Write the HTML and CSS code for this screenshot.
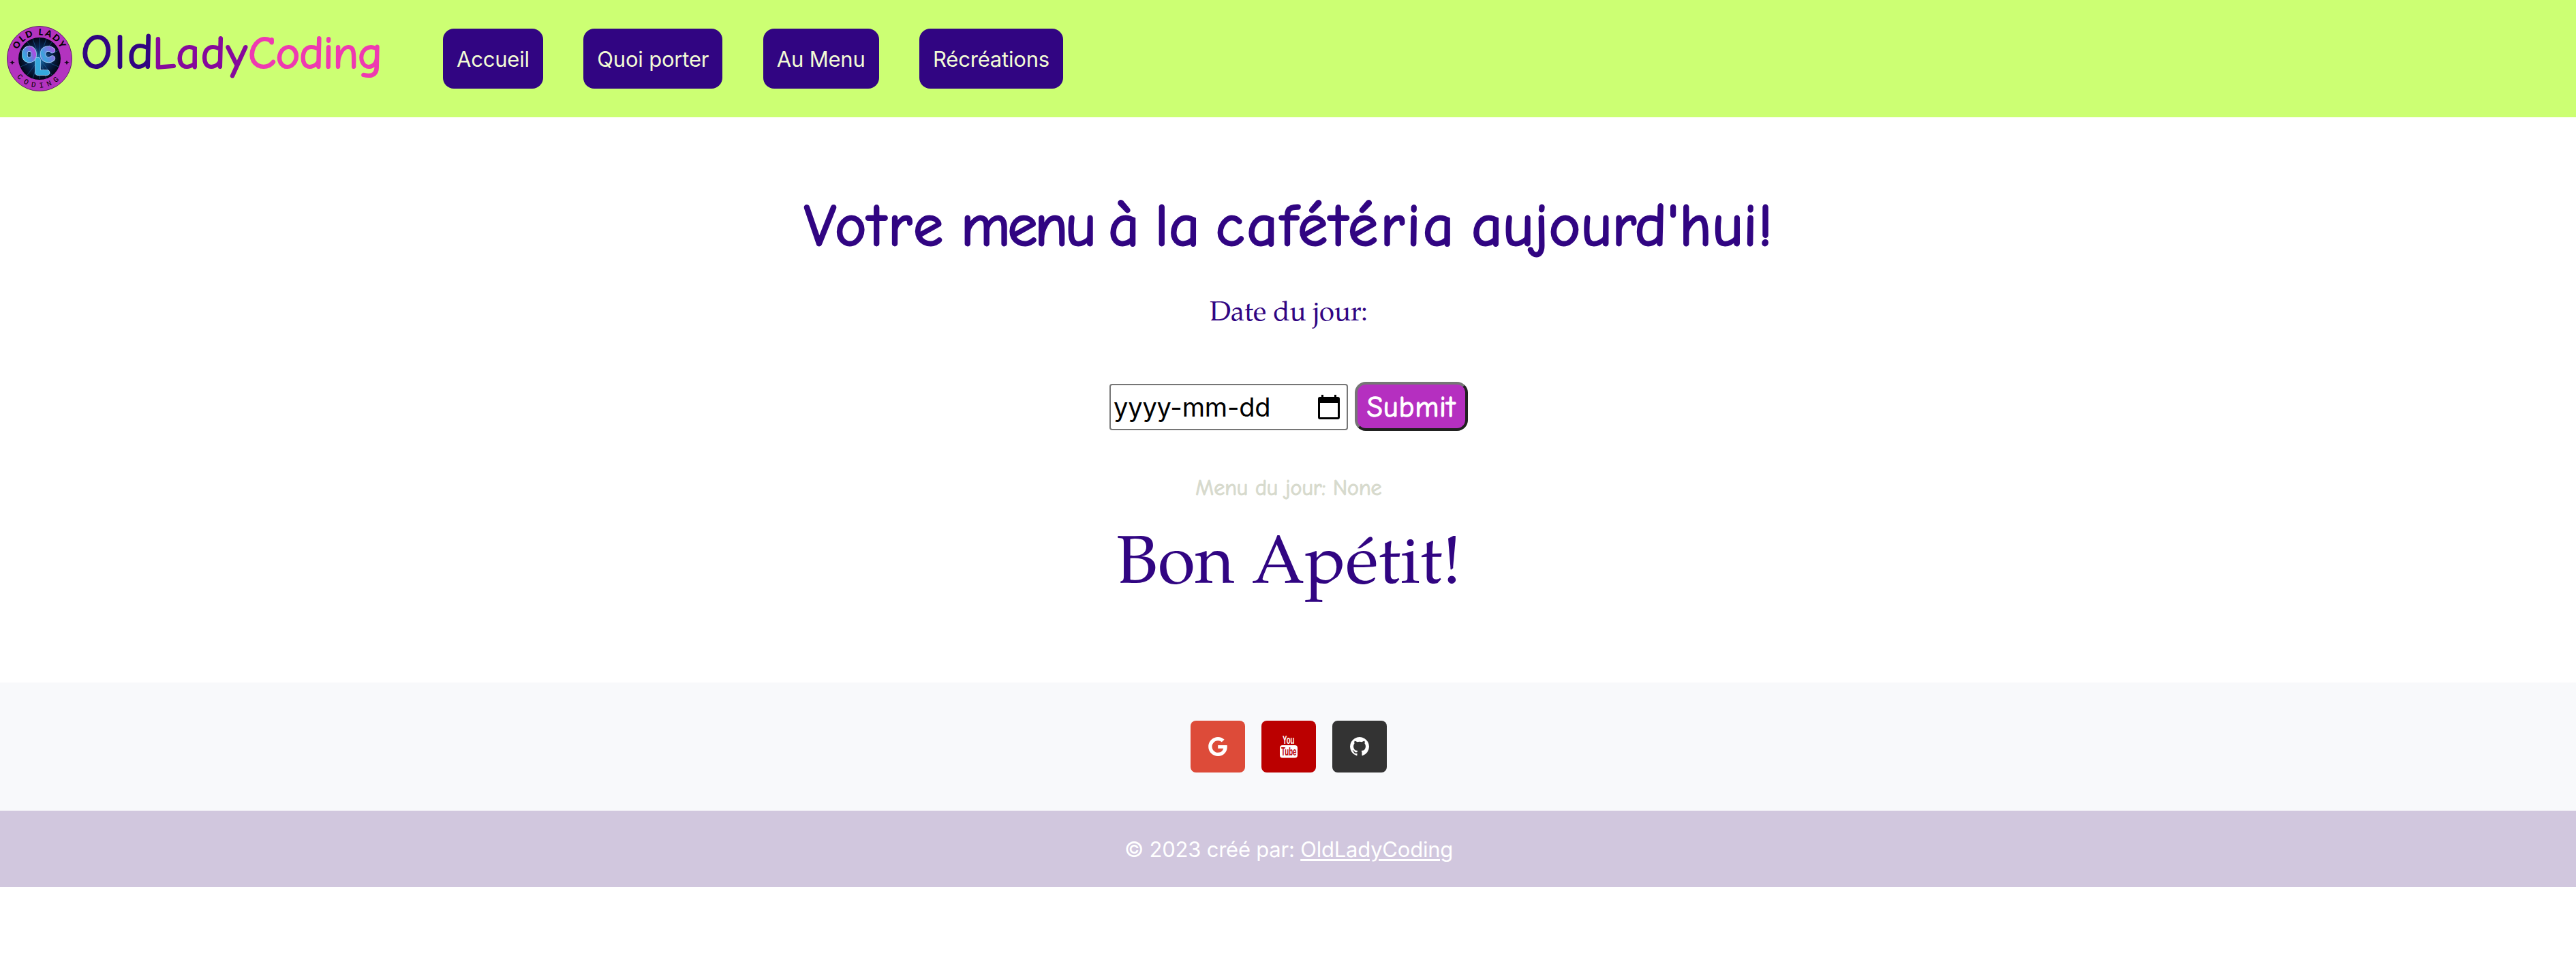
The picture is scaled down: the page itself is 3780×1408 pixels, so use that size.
FILE: index.html
```html
<!DOCTYPE html>
<html lang="fr">
<head>
<meta charset="utf-8">
<title>OldLadyCoding</title>
<link rel="stylesheet" href="styles.css">
</head>
<body>
<header class="navbar">
  <svg class="logo" viewBox="0 0 96 96">
    <defs>
      <radialGradient id="space"><stop offset="0" stop-color="#1768a0"/><stop offset=".55" stop-color="#082550"/><stop offset="1" stop-color="#020615"/></radialGradient>
      <linearGradient id="neon" gradientUnits="userSpaceOnUse" x1="24" y1="52" x2="68" y2="30"><stop offset="0" stop-color="#28bfe0"/><stop offset=".25" stop-color="#5b82df"/><stop offset=".42" stop-color="#b04be0"/><stop offset=".6" stop-color="#3aa5dc"/><stop offset="1" stop-color="#a55be4"/></linearGradient>
      <path id="arcTop" d="M13.500 48a34.500 34.500 0 0 1 69 0"/>
      <path id="arcBottom" d="M5.500 48a42.500 42.500 0 0 0 85 0"/>
    </defs>
    <circle cx="48" cy="48" r="47.500" fill="#b333bf" stroke="#5c2468"/>
    <circle cx="48" cy="48" r="31" fill="url(#space)"/>
    <g stroke="#2279bd" stroke-width=".7" opacity=".7"><path d="M48 18v60M30 24l36 48M20 36l56 24M20 60l56-24M30 72l36-48M38 19l20 58M58 19L38 77"/></g>
    <text class="logo-old"><textPath href="#arcTop" startOffset="50%" text-anchor="middle">OLD LADY</textPath></text>
    <text class="logo-coding"><textPath href="#arcBottom" startOffset="50%" text-anchor="middle">CODING</textPath></text>
    <g fill="none" stroke-linecap="round" stroke-linejoin="round">
      <g stroke="#a9d5f7" stroke-width="8.500"><rect x="26.500" y="33.500" width="13" height="16.500" rx="6.500"/><path d="M67 36c-5-4.500-14-3-14 5.500s9 10.500 14 6"/></g>
      <g stroke="url(#neon)" stroke-width="7"><rect x="26.500" y="33.500" width="13" height="16.500" rx="6.500"/><path d="M67 36c-5-4.500-14-3-14 5.500s9 10.500 14 6"/></g>
      <path stroke="#a9d5f7" stroke-width="8.500" d="M45.500 50v18.500h13.500"/>
      <path stroke="#35a9dd" stroke-width="7" d="M45.500 50v18.500h13.500"/>
    </g>
    <path d="M8 51l1.500 2.500L12 54l-2.500.8L8 57.500l-1.500-2.700L4 54l2.500-.5zM88 51l1.500 2.500L92 54l-2.500.8L88 57.500l-1.500-2.700L84 54l2.500-.5z" transform="translate(0 -.5)" fill="#16051d"/>
  </svg>
  <a class="brand"><span class="brand-old">Old</span><span class="brand-lady">Lady</span><span class="brand-coding">Coding</span></a>
  <nav class="menu">
    <a class="menu-link">Accueil</a>
    <a class="menu-link">Quoi porter</a>
    <a class="menu-link">Au Menu</a>
    <a class="menu-link">Récréations</a>
  </nav>
</header>
<main class="content">
  <h1 class="title"><span class="loose">Votre</span> <span class="tight">menu</span> à la <span class="loose">cafétéria</span> aujourd'hui!</h1>
  <p class="date-label">Date du jour:</p>
  <form class="date-form">
    <div class="date-input"><span>yyyy-mm-dd</span>
      <svg class="calendar" viewBox="0 0 32 36"><path d="M5 0h3v3h16V0h3v3h2a3 3 0 0 1 3 3v27a3 3 0 0 1-3 3H3a3 3 0 0 1-3-3V6a3 3 0 0 1 3-3h2zM3 12v21h26V12z" fill-rule="evenodd"/></svg>
    </div>
    <button class="submit" type="button">Submit</button>
  </form>
  <p class="menu-day">Menu du jour: None</p>
  <p class="enjoy">Bon Apétit!</p>
</main>
<footer>
  <div class="social">
    <a class="social-link google"><svg width="28" height="28" viewBox="0 8 488 496"><path d="M488 261.800C488 403.300 391.100 504 248 504 110.800 504 0 393.200 0 256S110.800 8 248 8c66.800 0 123 24.500 166.300 64.900l-67.500 64.900C258.500 52.600 94.300 116.600 94.300 256c0 86.500 69.100 156.600 153.700 156.600 98.200 0 135-70.400 140.800-106.900H248v-85.300h236.100c2.300 12.700 3.900 24.900 3.900 41.400z"/></svg></a>
    <a class="social-link youtube"><svg width="28" height="34" viewBox="0 0 28 34"><text class="yt-you" x="5" y="13" textLength="17.500" lengthAdjust="spacingAndGlyphs">You</text><rect x="1" y="15" width="26" height="18.500" rx="4"/><text class="yt-tube" x="3" y="30" textLength="22.500" lengthAdjust="spacingAndGlyphs">Tube</text></svg></a>
    <a class="social-link github"><svg width="28" height="28" viewBox="128 128 1536 1536"><path d="M896 128q209 0 385.500 103t279.500 279.500 103 385.500q0 251-146.500 451.500t-378.500 277.500q-27 5-40-7t-13-30q0-3 .5-76.500t.5-134.500q0-97-52-142 57-6 102.500-18t94-39 81-66.500 53-105 20.500-150.500q0-119-79-206 37-91-8-204-28-9-81 11t-92 44l-38 24q-93-26-192-26t-192 26q-16-11-42.500-27t-83.500-38.500-85-13.500q-45 113-8 204-79 87-79 206 0 85 20.500 150t52.500 105 80.500 67 94 39 102.500 18q-39 36-49 103-21 10-45 15t-57 5-65.500-21.500-55.500-62.500q-19-32-48.500-52t-49.500-24l-20-3q-21 0-29 4.500t-5 11.500 9 14 13 12l7 5q22 10 43.500 38t31.500 51l10 23q13 38 44 61.500t67 30 69.500 7 55.500-3.500l23-4q0 38 .5 88.500t.5 54.500q0 18-13 30t-40 7q-232-77-378.500-277.500t-146.500-451.500q0-209 103-385.500t279.500-279.500 385.500-103z"/></svg></a>
  </div>
  <p class="copyright">© 2023 créé par: <a class="author">OldLadyCoding</a></p>
</footer>
</body>
</html>
```
FILE: styles.css
```css
* { box-sizing: border-box; }
body { margin: 0; background: #fff; color: #310582; font-family: Inter, "Liberation Sans", sans-serif; }
p, h1 { margin: 0; font-weight: 400; white-space: nowrap; }

.navbar { display: flex; align-items: center; height: 172px; padding-left: 10px; background: #ccff73; }
.logo { width: 96px; height: 96px; flex: none; }
.logo-old { font: 900 13px Lato, sans-serif; letter-spacing: 2.200px; }
.logo-coding { font: 400 11px "Liberation Mono", monospace; letter-spacing: 6px; }
.brand, .title, .submit, .menu-day { -webkit-text-stroke: 0.033em currentColor; }
.brand { width: 444px; margin: -16px 0 0 13px; font: 400 67px/90px "Comic Sans MS", "Comic Neue", "Noto Sans", sans-serif; white-space: nowrap; }
.brand-old { color: #310582; font-size: 71px; letter-spacing: 3.500px; }
.brand-lady { margin-left: -4px; color: #860a9c; letter-spacing: 1.900px; }
.brand-coding { color: #ee3ab1; letter-spacing: -0.700px; }
.menu { display: flex; gap: 59.500px; margin-left: 87px; }
.menu-link { height: 88px; padding: 0 20px; border-radius: 16px; background: #310582; color: #f2fbd6; font-size: 31px; letter-spacing: -0.200px; line-height: 89px; white-space: nowrap; }

.content { display: flex; flex-direction: column; align-items: center; height: 829px; padding: 100px 0 0 2px; }
.title { height: 120px; font: 400 87px/120px "Comic Sans MS", "Comic Neue", "Noto Sans", sans-serif; letter-spacing: 1.250px; word-spacing: -8px; }
.loose { letter-spacing: 4px; }
.tight { letter-spacing: -3.500px; }
.date-label { height: 60px; margin-top: 39px; font: 40px/60px "Palatino Linotype", "TeX Gyre Pagella", "URW Palladio L", "P052", "Liberation Serif", serif; }
.date-form { display: flex; align-items: center; gap: 10px; height: 72px; margin-top: 69px; }
.date-input { display: flex; align-items: center; justify-content: space-between; width: 350px; height: 68px; margin-top: 2px; padding: 0 10px 0 4px; border: 2px solid #767676; border-radius: 4px; color: #000; font-size: 38px; letter-spacing: -0.150px; }
.calendar { width: 32px; height: 36px; }
.submit { width: 166px; height: 72px; padding: 4px 0 0; border: 4px solid; border-color: #767676 #212121 #212121 #767676; border-radius: 16px; background: #b52fc0; color: #fff; font: 400 42px/60px "Comic Sans MS", "Comic Neue", "Noto Sans", sans-serif; letter-spacing: 1.200px; }
.menu-day { height: 48px; margin-top: 60px; color: #d7dacd; font: 400 32px/48px "Comic Sans MS", "Comic Neue", "Noto Sans", sans-serif; }
.enjoy { height: 120px; margin-top: 33px; font: 100px/120px "Palatino Linotype", "TeX Gyre Pagella", "URW Palladio L", "P052", "Liberation Serif", serif; }

.social { display: flex; justify-content: center; gap: 24px; height: 188px; padding: 56px 0 56px 2px; background: #f8f9fb; }
.social-link { display: flex; align-items: center; justify-content: center; width: 80px; height: 76px; border-radius: 8px; fill: #fff; }
.social-link svg { overflow: visible; }
.google { background: #dd4b39; }
.youtube { background: #bb0000; }
.github { background: #333; }
.yt-you, .yt-tube { font: 700 16px "Liberation Sans", sans-serif; }
.yt-tube { fill: #bb0000; }
.copyright { height: 112px; padding-left: 2px; background: #d1c7de; color: #fff; font-size: 31px; letter-spacing: -0.220px; line-height: 113px; text-align: center; }
.author { text-decoration: underline; text-decoration-thickness: 3px; text-underline-offset: 3px; }
```
